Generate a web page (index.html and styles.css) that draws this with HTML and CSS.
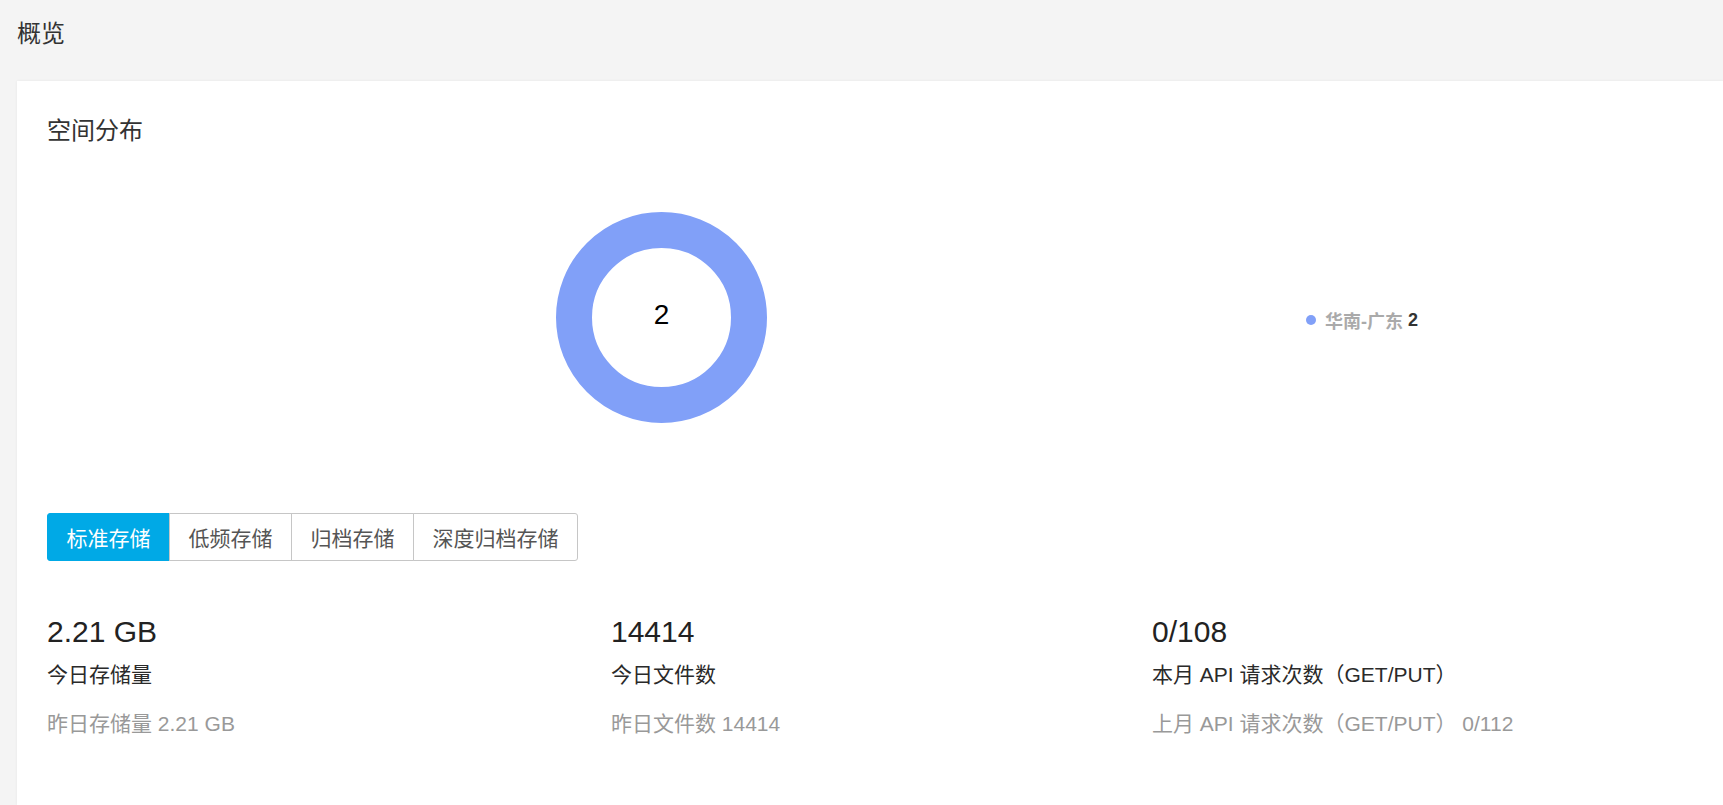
FILE: index.html
```html
<!DOCTYPE html>
<html lang="zh-CN">
<head>
<meta charset="utf-8">
<title>概览</title>
<link rel="stylesheet" href="styles.css">
</head>
<body>
<div class="page">
  <header class="page-header">概览</header>
  <section class="card">
    <h2 class="card-title">空间分布</h2>
    <div class="chart-row">
      <div class="chart-box">
        <div class="donut"><span class="donut-value">2</span></div>
      </div>
      <div class="legend">
        <span class="legend-dot"></span>
        <span class="legend-name">华南-广东</span>
        <span class="legend-num">2</span>
      </div>
    </div>
    <div class="tabs">
      <button class="tab active">标准存储</button>
      <button class="tab">低频存储</button>
      <button class="tab">归档存储</button>
      <button class="tab">深度归档存储</button>
    </div>
    <div class="stats">
      <div class="stat">
        <div class="stat-value">2.21 GB</div>
        <div class="stat-label">今日存储量</div>
        <div class="stat-sub">昨日存储量 2.21 GB</div>
      </div>
      <div class="stat">
        <div class="stat-value">14414</div>
        <div class="stat-label">今日文件数</div>
        <div class="stat-sub">昨日文件数 14414</div>
      </div>
      <div class="stat">
        <div class="stat-value">0/108</div>
        <div class="stat-label">本月 API 请求次数（GET/PUT）</div>
        <div class="stat-sub">上月 API 请求次数（GET/PUT） 0/112</div>
      </div>
    </div>
  </section>
</div>
</body>
</html>
```

FILE: styles.css
```css
* { box-sizing: border-box; }
html, body {
  margin: 0;
  padding: 0;
  height: 100%;
  overflow: hidden;
}
body {
  background: #f4f4f4;
  font-family: "Liberation Sans", "Noto Sans CJK SC", sans-serif;
  color: #333;
}
.page {
  padding-left: 17px;
  height: 100%;
  display: flex;
  flex-direction: column;
}
.page-header {
  font-size: 24px;
  line-height: 33px;
  padding-top: 17px;
  height: 81px;
  flex: none;
  color: #333;
}
.card {
  flex: 1;
  background: #fff;
  box-shadow: 0 0 3px rgba(0, 0, 0, 0.06);
  padding: 35px 0 0 30px;
}
.card-title {
  margin: 0;
  font-size: 24px;
  font-weight: normal;
  line-height: 30px;
  color: #333;
}
.chart-row {
  display: flex;
  align-items: center;
  height: 342px;
}
.chart-box {
  width: 1229px;
  display: flex;
  justify-content: center;
}
.donut {
  width: 211px;
  height: 211px;
  border-radius: 50%;
  border: 36px solid #81a0f8;
  display: flex;
  align-items: center;
  justify-content: center;
}
.donut-value {
  font-size: 28px;
  color: #000;
  margin-top: -4px;
}
.legend {
  margin-left: 30px;
  margin-top: 6px;
  display: flex;
  align-items: center;
  font-size: 18px;
  font-weight: bold;
}
.legend-dot {
  width: 10px;
  height: 10px;
  border-radius: 50%;
  background: #81a0f8;
  margin-right: 9px;
}
.legend-name {
  color: #aaa;
  margin-right: 5px;
}
.legend-num {
  color: #333;
}
.tabs {
  display: flex;
  margin-top: 25px;
}
.tab {
  font-family: inherit;
  font-size: 21px;
  height: 48px;
  padding: 0 18.5px;
  background: #fff;
  color: #555;
  border: 1px solid #c6c6c6;
  margin: 0 0 0 -1px;
  cursor: pointer;
}
.tab:first-child {
  margin-left: 0;
  border-radius: 3px 0 0 3px;
}
.tab:last-child {
  border-radius: 0 3px 3px 0;
}
.tab.active {
  background: #00a9e6;
  border-color: #00a9e6;
  color: #fff;
}
.stats {
  display: grid;
  grid-template-columns: 564px 541px 1fr;
  margin-top: 51px;
}
.stat-value {
  font-size: 30px;
  line-height: 40px;
  color: #222;
}
.stat-label {
  font-size: 21px;
  line-height: 28px;
  margin-top: 9px;
  color: #2a2a2a;
}
.stat-sub {
  font-size: 21px;
  line-height: 28px;
  margin-top: 21px;
  color: #999;
}
```
